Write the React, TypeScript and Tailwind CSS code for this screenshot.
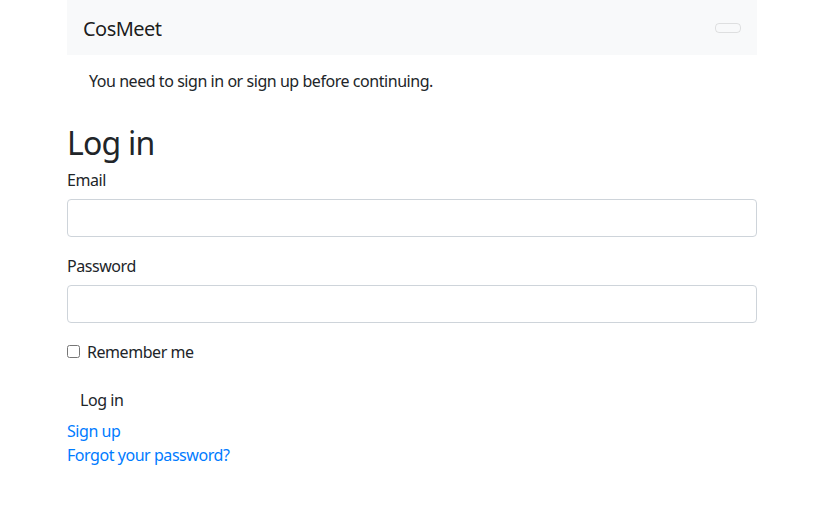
import React, { useState } from 'react';

export default function App() {
  const [remember, setRemember] = useState(false);

  return (
    <div className="min-h-screen bg-white text-[#212529] text-base leading-6 tracking-[-0.45px]" style={{ fontFamily: '"Noto Sans", "Liberation Sans", sans-serif' }}>
      <div className="w-[691px] pr-px mx-auto">
        <nav className="bg-[#f8f9fa] pl-4 pr-4 pt-2 pb-[7px] flex items-center justify-between">
          <a href="#" className="text-xl leading-[30px] pt-[6px] pb-1 text-black/90 tracking-[-0.55px]">CosMeet</a>
          <button className="w-[26px] h-[10px] border border-black/10 rounded-[4px]" aria-label="Toggle navigation"></button>
        </nav>

        <div className="mb-[14px] pl-[21px] pr-5 pt-[13px] pb-[11px] border border-transparent">
          <p>You need to sign in or sign up before continuing.</p>
        </div>

        <h1 className="text-[32px] leading-[48px] font-normal tracking-[-0.8px]">Log in</h1>

        <form onSubmit={(e) => e.preventDefault()}>
          <div className="mb-4">
            <label className="block mb-2 pt-px -mb-[-7px] h-6">Email</label>
            <input type="email" className="w-full h-[38px] px-3 border border-[#ced4da] rounded-[4px] outline-none focus:border-[#80bdff]" />
          </div>

          <div className="mb-4">
            <label className="block mb-2 pt-px h-6">Password</label>
            <input type="password" className="w-full h-[38px] px-3 border border-[#ced4da] rounded-[4px] outline-none focus:border-[#80bdff]" />
          </div>

          <div className="mb-4 flex items-center">
            <input
              type="checkbox"
              checked={remember}
              onChange={(e) => setRemember(e.target.checked)}
              className="w-[13px] h-[13px] m-0 mr-[7px]"
            />
            <label className="pt-px">Remember me</label>
          </div>

          <button type="submit" className="h-[38px] px-3 pt-px border border-transparent rounded-[4px]">
            Log in
          </button>
        </form>

        <a href="#" className="block text-[#007bff] hover:underline pt-px -mb-px">Sign up</a>
        <a href="#" className="block text-[#007bff] hover:underline pt-px">Forgot your password?</a>
      </div>
    </div>
  );
}
